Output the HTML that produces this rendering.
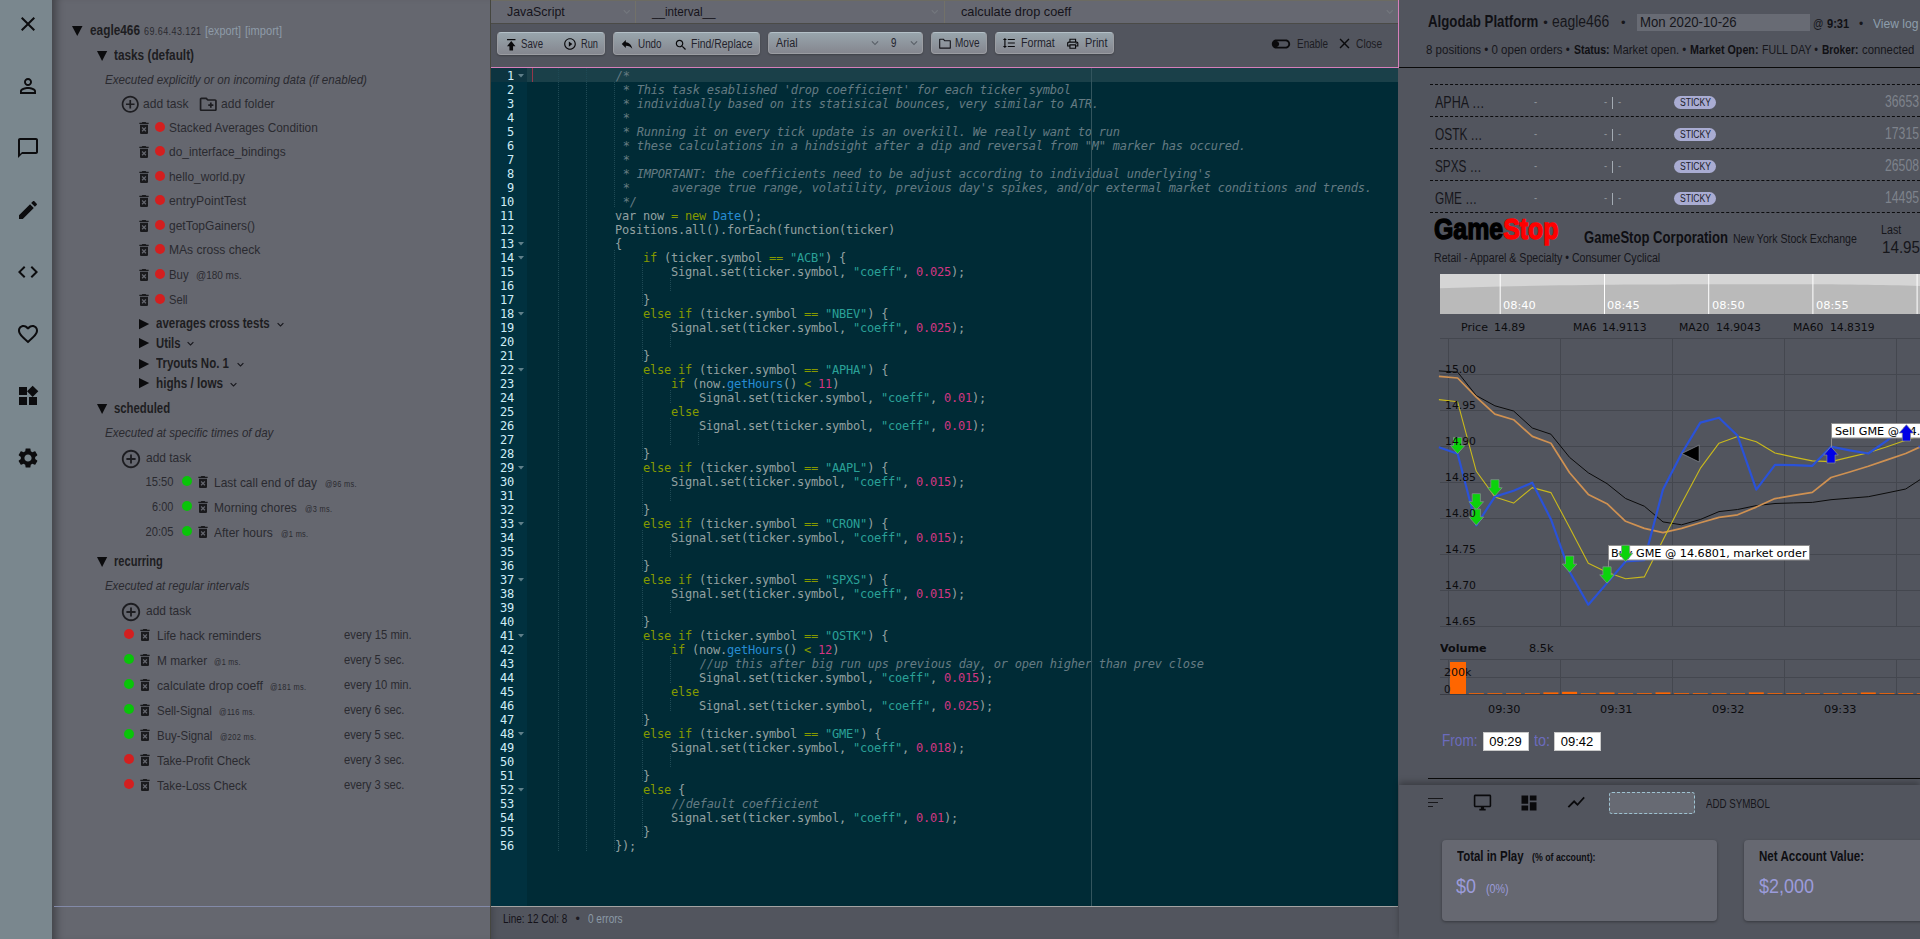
<!DOCTYPE html><html lang="en"><head><meta charset="utf-8"><title>Algodab Platform</title><style>

html,body{margin:0;padding:0}
body{width:1920px;height:939px;overflow:hidden;position:relative;background:#52555e;font-family:"Liberation Sans",sans-serif}
.t{position:absolute;white-space:pre;transform-origin:0 0;display:block}
svg{display:block;overflow:visible}


.btn{position:absolute;box-sizing:border-box;border:1px solid #9b9da2;border-top-color:#b4c0c7;border-radius:4px;background:linear-gradient(#98a5ac,#85878f);box-shadow:0 1px 2px rgba(0,0,0,.25)}
.cl{position:absolute;left:531px;height:14px;margin-top:1px;white-space:pre;font:12px/14px 'DejaVu Sans Mono','Liberation Mono',monospace;letter-spacing:-0.2246px;color:#93a1a1}
.cl i{font-style:italic;color:#657b83;position:relative;left:0.8px}
.cl b{font-weight:normal;color:#859900}
.cl s{text-decoration:none;color:#2aa198}
.cl u{text-decoration:none;color:#d33682}
.cl em{font-style:normal;color:#268bd2}
.gn{position:absolute;margin-top:1px;left:491px;width:23px;height:14px;text-align:right;white-space:pre;font:12px/14px 'DejaVu Sans Mono','Liberation Mono',monospace;letter-spacing:-0.2246px;color:#d0edf7}

</style></head><body>
<div style="position:absolute;left:0px;top:0px;width:52px;height:939px;background:#7a878e;"></div>
<div style="position:absolute;left:52px;top:0px;width:438px;height:939px;background:#65676f;box-shadow:inset 10px 0 9px -6px rgba(0,0,0,.36);"></div>
<div style="position:absolute;left:54px;top:906px;width:436px;height:1px;background:#838aa8;"></div>
<div style="position:absolute;left:490px;top:0px;width:1px;height:939px;background:#45463f;"></div>
<div style="position:absolute;left:491px;top:0px;width:907px;height:24px;background:#666871;border-top:1px solid #6c6b62;border-bottom:1px solid #4b4b47;box-sizing:border-box;"></div>
<div style="position:absolute;left:491px;top:24px;width:907px;height:43px;background:#52555e;"></div>
<div style="position:absolute;left:491px;top:67px;width:908px;height:1px;background:#d77fbb;"></div>
<div style="position:absolute;left:1398px;top:0px;width:1px;height:67px;background:#d77fbb;"></div>
<div style="position:absolute;left:491px;top:68px;width:907px;height:838px;background:#002b36;"></div>
<div style="position:absolute;left:491px;top:68px;width:36px;height:838px;background:#01313f;"></div>
<div style="position:absolute;left:491px;top:68px;width:907px;height:14px;background:#1a4049;"></div>
<div style="position:absolute;left:491px;top:68px;width:36px;height:14px;background:#0d3440;"></div>
<div style="position:absolute;left:491px;top:906px;width:907px;height:1px;background:#a3a3a3;"></div>
<div style="position:absolute;left:491px;top:907px;width:907px;height:32px;background:#52555e;box-shadow:inset 6px 0 6px -4px rgba(0,0,0,.18);"></div>
<div style="position:absolute;left:1399px;top:0px;width:521px;height:939px;background:#52555e;"></div>
<div style="position:absolute;left:1399px;top:67px;width:521px;height:1px;background:#0a0a0a;"></div>
<svg style="position:absolute;left:16.00px;top:12.00px;" width="24" height="24.00" viewBox="0 0 24 24"><path fill="#0c0c0e" d="M19 6.41L17.59 5 12 10.59 6.41 5 5 6.41 10.59 12 5 17.59 6.41 19 12 13.41 17.59 19 19 17.59 13.41 12z"/></svg>
<svg style="position:absolute;left:16.00px;top:74.00px;" width="24" height="24.00" viewBox="0 0 24 24"><path fill="#0c0c0e" d="M12 5.9c1.16 0 2.1.94 2.1 2.1s-.94 2.1-2.1 2.1S9.9 9.16 9.9 8s.94-2.1 2.1-2.1m0 9c2.97 0 6.1 1.46 6.1 2.1v1.1H5.9V17c0-.64 3.13-2.1 6.1-2.1M12 4C9.79 4 8 5.79 8 8s1.79 4 4 4 4-1.79 4-4-1.79-4-4-4zm0 9c-2.67 0-8 1.34-8 4v3h16v-3c0-2.66-5.33-4-8-4z"/></svg>
<svg style="position:absolute;left:16.00px;top:136.00px;" width="24" height="24.00" viewBox="0 0 24 24"><path fill="#0c0c0e" d="M20 2H4c-1.1 0-2 .9-2 2v18l4-4h14c1.1 0 2-.9 2-2V4c0-1.1-.9-2-2-2zm0 14H6l-2 2V4h16v12z"/></svg>
<svg style="position:absolute;left:16.00px;top:198.00px;" width="24" height="24.00" viewBox="0 0 24 24"><path fill="#0c0c0e" d="M3 17.25V21h3.75L17.81 9.94l-3.75-3.75L3 17.25zM20.71 7.04c.39-.39.39-1.02 0-1.41l-2.34-2.34c-.39-.39-1.02-.39-1.41 0l-1.83 1.83 3.75 3.75 1.83-1.83z"/></svg>
<svg style="position:absolute;left:16.00px;top:260.00px;" width="24" height="24.00" viewBox="0 0 24 24"><path fill="#0c0c0e" d="M9.4 16.6L4.8 12l4.6-4.6L8 6l-6 6 6 6 1.4-1.4zm5.2 0l4.6-4.6-4.6-4.6L16 6l6 6-6 6-1.4-1.4z"/></svg>
<svg style="position:absolute;left:16.00px;top:322.00px;" width="24" height="24.00" viewBox="0 0 24 24"><path fill="#0c0c0e" d="M16.5 3c-1.74 0-3.41.81-4.5 2.09C10.91 3.81 9.24 3 7.5 3 4.42 3 2 5.42 2 8.5c0 3.78 3.4 6.86 8.55 11.54L12 21.35l1.45-1.32C18.6 15.36 22 12.28 22 8.5 22 5.42 19.58 3 16.5 3zm-4.4 15.55l-.1.1-.1-.1C7.14 14.24 4 11.39 4 8.5 4 6.5 5.5 5 7.5 5c1.54 0 3.04.99 3.57 2.36h1.87C13.46 5.99 14.96 5 16.5 5c2 0 3.5 1.5 3.5 3.5 0 2.89-3.14 5.74-7.9 10.05z"/></svg>
<svg style="position:absolute;left:16.00px;top:384.00px;" width="24" height="24.00" viewBox="0 0 24 24"><path fill="#0c0c0e" d="M13 13v8h8v-8h-8zM3 21h8v-8H3v8zM3 3v8h8V3H3zm13.66-1.31L11 7.34 16.66 13l5.66-5.66-5.66-5.65z"/></svg>
<svg style="position:absolute;left:16.00px;top:446.00px;" width="24" height="24.00" viewBox="0 0 24 24"><path fill="#0c0c0e" d="M19.14 12.94c.04-.3.06-.61.06-.94 0-.32-.02-.64-.07-.94l2.03-1.58c.18-.14.23-.41.12-.61l-1.92-3.32c-.12-.22-.37-.29-.59-.22l-2.39.96c-.5-.38-1.03-.7-1.62-.94l-.36-2.54c-.04-.24-.24-.41-.48-.41h-3.84c-.24 0-.43.17-.47.41l-.36 2.54c-.59.24-1.13.57-1.62.94l-2.39-.96c-.22-.08-.47 0-.59.22L2.74 8.87c-.12.21-.08.47.12.61l2.03 1.58c-.05.3-.09.63-.09.94s.02.64.07.94l-2.03 1.58c-.18.14-.23.41-.12.61l1.92 3.32c.12.22.37.29.59.22l2.39-.96c.5.38 1.03.7 1.62.94l.36 2.54c.05.24.24.41.48.41h3.84c.24 0 .44-.17.47-.41l.36-2.54c.59-.24 1.13-.56 1.62-.94l2.39.96c.22.08.47 0 .59-.22l1.92-3.32c.12-.22.07-.47-.12-.61l-2.01-1.58zM12 15.6c-1.98 0-3.6-1.62-3.6-3.6s1.62-3.6 3.6-3.6 3.6 1.62 3.6 3.6-1.62 3.6-3.6 3.6z"/></svg>
<svg style="position:absolute;left:72.4px;top:26px" width="10.5" height="10"><polygon fill="#0b0b0d" points="0,0 10.5,0 5.25,10"/></svg>
<svg style="position:absolute;left:96.5px;top:51px" width="10.2" height="10"><polygon fill="#0b0b0d" points="0,0 10.2,0 5.1,10"/></svg>
<svg style="position:absolute;left:120.05px;top:94.15px;" width="20.5" height="20.50" viewBox="0 0 24 24"><path fill="#1d1d21" d="M13 7h-2v4H7v2h4v4h2v-4h4v-2h-4V7zm-1-5C6.48 2 2 6.48 2 12s4.48 10 10 10 10-4.48 10-10S17.52 2 12 2zm0 18c-4.41 0-8-3.59-8-8s3.59-8 8-8 8 3.59 8 8-3.59 8-8 8z"/></svg>
<svg style="position:absolute;left:197.75px;top:94.35px;" width="20.5" height="20.50" viewBox="0 0 24 24"><path fill="#1d1d21" d="M20 6h-8l-2-2H4c-1.11 0-1.99.89-1.99 2L2 18c0 1.11.89 2 2 2h16c1.11 0 2-.89 2-2V8c0-1.11-.89-2-2-2zm0 12H4V6h5.17l2 2H20v10zm-8-4h2v2h2v-2h2v-2h-2v-2h-2v2h-2z"/></svg>
<svg style="position:absolute;left:136.00px;top:119.80px;" width="16" height="16.00" viewBox="0 0 24 24"><path fill="#1a1a1d" d="M6 19c0 1.1.9 2 2 2h8c1.1 0 2-.9 2-2V7H6v12zm2.46-7.12l1.41-1.41L12 12.59l2.12-2.12 1.41 1.41L13.41 14l2.12 2.12-1.41 1.41L12 15.41l-2.12 2.12-1.41-1.41L10.59 14l-2.13-2.12zM15.5 4l-1-1h-5l-1 1H5v2h14V4z"/></svg>
<div style="position:absolute;left:155.0px;top:122.2px;width:10px;height:10px;border-radius:50%;background:#d31f1f"></div>
<svg style="position:absolute;left:136.00px;top:143.80px;" width="16" height="16.00" viewBox="0 0 24 24"><path fill="#1a1a1d" d="M6 19c0 1.1.9 2 2 2h8c1.1 0 2-.9 2-2V7H6v12zm2.46-7.12l1.41-1.41L12 12.59l2.12-2.12 1.41 1.41L13.41 14l2.12 2.12-1.41 1.41L12 15.41l-2.12 2.12-1.41-1.41L10.59 14l-2.13-2.12zM15.5 4l-1-1h-5l-1 1H5v2h14V4z"/></svg>
<div style="position:absolute;left:155.0px;top:146.2px;width:10px;height:10px;border-radius:50%;background:#d31f1f"></div>
<svg style="position:absolute;left:136.00px;top:168.80px;" width="16" height="16.00" viewBox="0 0 24 24"><path fill="#1a1a1d" d="M6 19c0 1.1.9 2 2 2h8c1.1 0 2-.9 2-2V7H6v12zm2.46-7.12l1.41-1.41L12 12.59l2.12-2.12 1.41 1.41L13.41 14l2.12 2.12-1.41 1.41L12 15.41l-2.12 2.12-1.41-1.41L10.59 14l-2.13-2.12zM15.5 4l-1-1h-5l-1 1H5v2h14V4z"/></svg>
<div style="position:absolute;left:155.0px;top:171.2px;width:10px;height:10px;border-radius:50%;background:#d31f1f"></div>
<svg style="position:absolute;left:136.00px;top:192.80px;" width="16" height="16.00" viewBox="0 0 24 24"><path fill="#1a1a1d" d="M6 19c0 1.1.9 2 2 2h8c1.1 0 2-.9 2-2V7H6v12zm2.46-7.12l1.41-1.41L12 12.59l2.12-2.12 1.41 1.41L13.41 14l2.12 2.12-1.41 1.41L12 15.41l-2.12 2.12-1.41-1.41L10.59 14l-2.13-2.12zM15.5 4l-1-1h-5l-1 1H5v2h14V4z"/></svg>
<div style="position:absolute;left:155.0px;top:195.2px;width:10px;height:10px;border-radius:50%;background:#d31f1f"></div>
<svg style="position:absolute;left:136.00px;top:217.80px;" width="16" height="16.00" viewBox="0 0 24 24"><path fill="#1a1a1d" d="M6 19c0 1.1.9 2 2 2h8c1.1 0 2-.9 2-2V7H6v12zm2.46-7.12l1.41-1.41L12 12.59l2.12-2.12 1.41 1.41L13.41 14l2.12 2.12-1.41 1.41L12 15.41l-2.12 2.12-1.41-1.41L10.59 14l-2.13-2.12zM15.5 4l-1-1h-5l-1 1H5v2h14V4z"/></svg>
<div style="position:absolute;left:155.0px;top:220.2px;width:10px;height:10px;border-radius:50%;background:#d31f1f"></div>
<svg style="position:absolute;left:136.00px;top:241.70px;" width="16" height="16.00" viewBox="0 0 24 24"><path fill="#1a1a1d" d="M6 19c0 1.1.9 2 2 2h8c1.1 0 2-.9 2-2V7H6v12zm2.46-7.12l1.41-1.41L12 12.59l2.12-2.12 1.41 1.41L13.41 14l2.12 2.12-1.41 1.41L12 15.41l-2.12 2.12-1.41-1.41L10.59 14l-2.13-2.12zM15.5 4l-1-1h-5l-1 1H5v2h14V4z"/></svg>
<div style="position:absolute;left:155.0px;top:244.1px;width:10px;height:10px;border-radius:50%;background:#d31f1f"></div>
<svg style="position:absolute;left:136.00px;top:266.80px;" width="16" height="16.00" viewBox="0 0 24 24"><path fill="#1a1a1d" d="M6 19c0 1.1.9 2 2 2h8c1.1 0 2-.9 2-2V7H6v12zm2.46-7.12l1.41-1.41L12 12.59l2.12-2.12 1.41 1.41L13.41 14l2.12 2.12-1.41 1.41L12 15.41l-2.12 2.12-1.41-1.41L10.59 14l-2.13-2.12zM15.5 4l-1-1h-5l-1 1H5v2h14V4z"/></svg>
<div style="position:absolute;left:155.0px;top:269.2px;width:10px;height:10px;border-radius:50%;background:#d31f1f"></div>
<svg style="position:absolute;left:136.00px;top:291.80px;" width="16" height="16.00" viewBox="0 0 24 24"><path fill="#1a1a1d" d="M6 19c0 1.1.9 2 2 2h8c1.1 0 2-.9 2-2V7H6v12zm2.46-7.12l1.41-1.41L12 12.59l2.12-2.12 1.41 1.41L13.41 14l2.12 2.12-1.41 1.41L12 15.41l-2.12 2.12-1.41-1.41L10.59 14l-2.13-2.12zM15.5 4l-1-1h-5l-1 1H5v2h14V4z"/></svg>
<div style="position:absolute;left:155.0px;top:294.2px;width:10px;height:10px;border-radius:50%;background:#d31f1f"></div>
<svg style="position:absolute;left:139.1px;top:318.5px" width="10.2" height="10.2"><polygon fill="#0b0b0d" points="0,0 10.2,5.1 0,10.2"/></svg>
<svg style="position:absolute;left:273.70px;top:317.80px;" width="13" height="13.00" viewBox="0 0 24 24"><path fill="#15151a" d="M16.59 8.59L12 13.17 7.41 8.59 6 10l6 6 6-6z"/></svg>
<svg style="position:absolute;left:139.1px;top:338.1px" width="10.2" height="10.2"><polygon fill="#0b0b0d" points="0,0 10.2,5.1 0,10.2"/></svg>
<svg style="position:absolute;left:184.30px;top:337.40px;" width="13" height="13.00" viewBox="0 0 24 24"><path fill="#15151a" d="M16.59 8.59L12 13.17 7.41 8.59 6 10l6 6 6-6z"/></svg>
<svg style="position:absolute;left:139.1px;top:358.5px" width="10.2" height="10.2"><polygon fill="#0b0b0d" points="0,0 10.2,5.1 0,10.2"/></svg>
<svg style="position:absolute;left:233.80px;top:357.80px;" width="13" height="13.00" viewBox="0 0 24 24"><path fill="#15151a" d="M16.59 8.59L12 13.17 7.41 8.59 6 10l6 6 6-6z"/></svg>
<svg style="position:absolute;left:139.1px;top:378.40000000000003px" width="10.2" height="10.2"><polygon fill="#0b0b0d" points="0,0 10.2,5.1 0,10.2"/></svg>
<svg style="position:absolute;left:226.80px;top:377.70px;" width="13" height="13.00" viewBox="0 0 24 24"><path fill="#15151a" d="M16.59 8.59L12 13.17 7.41 8.59 6 10l6 6 6-6z"/></svg>
<svg style="position:absolute;left:96.5px;top:403.6px" width="10.2" height="10"><polygon fill="#0b0b0d" points="0,0 10.2,0 5.1,10"/></svg>
<svg style="position:absolute;left:119.80px;top:447.80px;" width="22" height="22.00" viewBox="0 0 24 24"><path fill="#1d1d21" d="M13 7h-2v4H7v2h4v4h2v-4h4v-2h-4V7zm-1-5C6.48 2 2 6.48 2 12s4.48 10 10 10 10-4.48 10-10S17.52 2 12 2zm0 18c-4.41 0-8-3.59-8-8s3.59-8 8-8 8 3.59 8 8-3.59 8-8 8z"/></svg>
<div style="position:absolute;left:182.0px;top:475.5px;width:10px;height:10px;border-radius:50%;background:#09c409"></div>
<svg style="position:absolute;left:195.30px;top:473.80px;" width="16" height="16.00" viewBox="0 0 24 24"><path fill="#1a1a1d" d="M6 19c0 1.1.9 2 2 2h8c1.1 0 2-.9 2-2V7H6v12zm2.46-7.12l1.41-1.41L12 12.59l2.12-2.12 1.41 1.41L13.41 14l2.12 2.12-1.41 1.41L12 15.41l-2.12 2.12-1.41-1.41L10.59 14l-2.13-2.12zM15.5 4l-1-1h-5l-1 1H5v2h14V4z"/></svg>
<div style="position:absolute;left:182.0px;top:500.5px;width:10px;height:10px;border-radius:50%;background:#09c409"></div>
<svg style="position:absolute;left:195.30px;top:498.80px;" width="16" height="16.00" viewBox="0 0 24 24"><path fill="#1a1a1d" d="M6 19c0 1.1.9 2 2 2h8c1.1 0 2-.9 2-2V7H6v12zm2.46-7.12l1.41-1.41L12 12.59l2.12-2.12 1.41 1.41L13.41 14l2.12 2.12-1.41 1.41L12 15.41l-2.12 2.12-1.41-1.41L10.59 14l-2.13-2.12zM15.5 4l-1-1h-5l-1 1H5v2h14V4z"/></svg>
<div style="position:absolute;left:182.0px;top:525.5px;width:10px;height:10px;border-radius:50%;background:#09c409"></div>
<svg style="position:absolute;left:195.30px;top:523.80px;" width="16" height="16.00" viewBox="0 0 24 24"><path fill="#1a1a1d" d="M6 19c0 1.1.9 2 2 2h8c1.1 0 2-.9 2-2V7H6v12zm2.46-7.12l1.41-1.41L12 12.59l2.12-2.12 1.41 1.41L13.41 14l2.12 2.12-1.41 1.41L12 15.41l-2.12 2.12-1.41-1.41L10.59 14l-2.13-2.12zM15.5 4l-1-1h-5l-1 1H5v2h14V4z"/></svg>
<svg style="position:absolute;left:96.5px;top:556.9px" width="10.2" height="10"><polygon fill="#0b0b0d" points="0,0 10.2,0 5.1,10"/></svg>
<svg style="position:absolute;left:119.80px;top:600.50px;" width="22" height="22.00" viewBox="0 0 24 24"><path fill="#1d1d21" d="M13 7h-2v4H7v2h4v4h2v-4h4v-2h-4V7zm-1-5C6.48 2 2 6.48 2 12s4.48 10 10 10 10-4.48 10-10S17.52 2 12 2zm0 18c-4.41 0-8-3.59-8-8s3.59-8 8-8 8 3.59 8 8-3.59 8-8 8z"/></svg>
<div style="position:absolute;left:123.9px;top:629.1px;width:10px;height:10px;border-radius:50%;background:#d31f1f"></div>
<svg style="position:absolute;left:137.00px;top:627.00px;" width="16" height="16.00" viewBox="0 0 24 24"><path fill="#1a1a1d" d="M6 19c0 1.1.9 2 2 2h8c1.1 0 2-.9 2-2V7H6v12zm2.46-7.12l1.41-1.41L12 12.59l2.12-2.12 1.41 1.41L13.41 14l2.12 2.12-1.41 1.41L12 15.41l-2.12 2.12-1.41-1.41L10.59 14l-2.13-2.12zM15.5 4l-1-1h-5l-1 1H5v2h14V4z"/></svg>
<div style="position:absolute;left:123.9px;top:654.1px;width:10px;height:10px;border-radius:50%;background:#09c409"></div>
<svg style="position:absolute;left:137.00px;top:652.02px;" width="16" height="16.00" viewBox="0 0 24 24"><path fill="#1a1a1d" d="M6 19c0 1.1.9 2 2 2h8c1.1 0 2-.9 2-2V7H6v12zm2.46-7.12l1.41-1.41L12 12.59l2.12-2.12 1.41 1.41L13.41 14l2.12 2.12-1.41 1.41L12 15.41l-2.12 2.12-1.41-1.41L10.59 14l-2.13-2.12zM15.5 4l-1-1h-5l-1 1H5v2h14V4z"/></svg>
<div style="position:absolute;left:123.9px;top:679.1px;width:10px;height:10px;border-radius:50%;background:#09c409"></div>
<svg style="position:absolute;left:137.00px;top:677.04px;" width="16" height="16.00" viewBox="0 0 24 24"><path fill="#1a1a1d" d="M6 19c0 1.1.9 2 2 2h8c1.1 0 2-.9 2-2V7H6v12zm2.46-7.12l1.41-1.41L12 12.59l2.12-2.12 1.41 1.41L13.41 14l2.12 2.12-1.41 1.41L12 15.41l-2.12 2.12-1.41-1.41L10.59 14l-2.13-2.12zM15.5 4l-1-1h-5l-1 1H5v2h14V4z"/></svg>
<div style="position:absolute;left:123.9px;top:704.2px;width:10px;height:10px;border-radius:50%;background:#09c409"></div>
<svg style="position:absolute;left:137.00px;top:702.06px;" width="16" height="16.00" viewBox="0 0 24 24"><path fill="#1a1a1d" d="M6 19c0 1.1.9 2 2 2h8c1.1 0 2-.9 2-2V7H6v12zm2.46-7.12l1.41-1.41L12 12.59l2.12-2.12 1.41 1.41L13.41 14l2.12 2.12-1.41 1.41L12 15.41l-2.12 2.12-1.41-1.41L10.59 14l-2.13-2.12zM15.5 4l-1-1h-5l-1 1H5v2h14V4z"/></svg>
<div style="position:absolute;left:123.9px;top:729.2px;width:10px;height:10px;border-radius:50%;background:#09c409"></div>
<svg style="position:absolute;left:137.00px;top:727.08px;" width="16" height="16.00" viewBox="0 0 24 24"><path fill="#1a1a1d" d="M6 19c0 1.1.9 2 2 2h8c1.1 0 2-.9 2-2V7H6v12zm2.46-7.12l1.41-1.41L12 12.59l2.12-2.12 1.41 1.41L13.41 14l2.12 2.12-1.41 1.41L12 15.41l-2.12 2.12-1.41-1.41L10.59 14l-2.13-2.12zM15.5 4l-1-1h-5l-1 1H5v2h14V4z"/></svg>
<div style="position:absolute;left:123.9px;top:754.2px;width:10px;height:10px;border-radius:50%;background:#d31f1f"></div>
<svg style="position:absolute;left:137.00px;top:752.10px;" width="16" height="16.00" viewBox="0 0 24 24"><path fill="#1a1a1d" d="M6 19c0 1.1.9 2 2 2h8c1.1 0 2-.9 2-2V7H6v12zm2.46-7.12l1.41-1.41L12 12.59l2.12-2.12 1.41 1.41L13.41 14l2.12 2.12-1.41 1.41L12 15.41l-2.12 2.12-1.41-1.41L10.59 14l-2.13-2.12zM15.5 4l-1-1h-5l-1 1H5v2h14V4z"/></svg>
<div style="position:absolute;left:123.9px;top:779.2px;width:10px;height:10px;border-radius:50%;background:#d31f1f"></div>
<svg style="position:absolute;left:137.00px;top:777.12px;" width="16" height="16.00" viewBox="0 0 24 24"><path fill="#1a1a1d" d="M6 19c0 1.1.9 2 2 2h8c1.1 0 2-.9 2-2V7H6v12zm2.46-7.12l1.41-1.41L12 12.59l2.12-2.12 1.41 1.41L13.41 14l2.12 2.12-1.41 1.41L12 15.41l-2.12 2.12-1.41-1.41L10.59 14l-2.13-2.12zM15.5 4l-1-1h-5l-1 1H5v2h14V4z"/></svg>
<svg style="position:absolute;left:620.15px;top:5.05px;" width="13.5" height="13.50" viewBox="0 0 24 24"><path fill="#74777e" d="M16.59 8.59L12 13.17 7.41 8.59 6 10l6 6 6-6z"/></svg>
<div style="position:absolute;left:635px;top:1px;width:1px;height:22px;background:#727169;"></div>
<svg style="position:absolute;left:928.25px;top:5.05px;" width="13.5" height="13.50" viewBox="0 0 24 24"><path fill="#74777e" d="M16.59 8.59L12 13.17 7.41 8.59 6 10l6 6 6-6z"/></svg>
<div style="position:absolute;left:944px;top:1px;width:1px;height:22px;background:#727169;"></div>
<svg style="position:absolute;left:1382.55px;top:5.05px;" width="13.5" height="13.50" viewBox="0 0 24 24"><path fill="#74777e" d="M16.59 8.59L12 13.17 7.41 8.59 6 10l6 6 6-6z"/></svg>
<div class="btn" style="left:497px;top:32px;width:108px;height:23px"></div>
<svg style="position:absolute;left:503.65px;top:35.90px;" width="14.5" height="17.40" viewBox="0 0 24 24" preserveAspectRatio="none"><path fill="#0a0a0c" d="M5 4v2h14V4H5zm0 10h4v6h6v-6h4l-7-7-7 7z"/></svg>
<svg style="position:absolute;left:563.30px;top:37.30px;" width="14" height="14.00" viewBox="0 0 24 24"><path fill="#0a0a0c" d="M10 16.5l6-4.5-6-4.5v9zM12 2C6.48 2 2 6.48 2 12s4.48 10 10 10 10-4.48 10-10S17.52 2 12 2zm0 18c-4.41 0-8-3.59-8-8s3.59-8 8-8 8 3.59 8 8-3.59 8-8 8z"/></svg>
<div class="btn" style="left:613px;top:32px;width:147px;height:23px"></div>
<svg style="position:absolute;left:620.20px;top:37.20px;" width="14" height="14.00" viewBox="0 0 24 24"><path fill="#0a0a0c" d="M10 9V5l-7 7 7 7v-4.1c5 0 8.5 1.6 11 5.1-1-5-4-10-11-11z"/></svg>
<svg style="position:absolute;left:673.60px;top:37.60px;" width="14" height="14.00" viewBox="0 0 24 24"><path fill="#0a0a0c" d="M15.5 14h-.79l-.28-.27C15.41 12.59 16 11.11 16 9.5 16 5.91 13.09 3 9.5 3S3 5.91 3 9.5 5.91 16 9.5 16c1.61 0 3.09-.59 4.23-1.57l.27.28v.79l5 4.99L20.49 19l-4.99-5zm-6 0C7.01 14 5 11.99 5 9.5S7.01 5 9.5 5 14 7.01 14 9.5 11.99 14 9.5 14z"/></svg>
<div class="btn" style="left:768px;top:32px;width:155px;height:22px"></div>
<svg style="position:absolute;left:868.00px;top:35.60px;" width="14" height="14.00" viewBox="0 0 24 24"><path fill="#5a6068" d="M16.59 8.59L12 13.17 7.41 8.59 6 10l6 6 6-6z"/></svg>
<svg style="position:absolute;left:907.00px;top:35.60px;" width="14" height="14.00" viewBox="0 0 24 24"><path fill="#5a6068" d="M16.59 8.59L12 13.17 7.41 8.59 6 10l6 6 6-6z"/></svg>
<div class="btn" style="left:931px;top:32px;width:56px;height:22px"></div>
<svg style="position:absolute;left:938.8px;top:37.6px" width="12" height="11" viewBox="0 0 12 11"><path d="M0.7 1.2h3.6l1.3 1.5h5.7v7.4h-10.6z" fill="none" stroke="#15151a" stroke-width="1.1" stroke-linejoin="round"/></svg>
<div class="btn" style="left:995px;top:32px;width:119px;height:22px"></div>
<svg style="position:absolute;left:1001.50px;top:36.30px;" width="14" height="14.00" viewBox="0 0 24 24"><path fill="#0a0a0c" d="M6 7h2.5L5 3.5 1.5 7H4v10H1.5L5 20.5 8.5 17H6V7zm4-2v2h12V5H10zm0 14h12v-2H10v2zm0-6h12v-2H10v2z"/></svg>
<svg style="position:absolute;left:1065.75px;top:36.55px;" width="13.5" height="13.50" viewBox="0 0 24 24"><path fill="#0a0a0c" d="M19 8h-1V3H6v5H5c-1.66 0-3 1.34-3 3v6h4v4h12v-4h4v-6c0-1.66-1.34-3-3-3zM8 5h8v3H8V5zm8 12v2H8v-4h8v2zm2-2v-2H6v2H4v-4c0-.55.45-1 1-1h14c.55 0 1 .45 1 1v4h-2zM18 10.5a1 1 0 1 0 0 2 1 1 0 1 0 0-2z"/></svg>
<svg style="position:absolute;left:1269.80px;top:32.70px;" width="22" height="22.00" viewBox="0 0 24 24"><path fill="#0a0a0c" d="M17 7H7c-2.76 0-5 2.24-5 5s2.24 5 5 5h10c2.76 0 5-2.24 5-5s-2.24-5-5-5zm0 8H7c-1.65 0-3-1.35-3-3s1.35-3 3-3h10c1.65 0 3 1.35 3 3s-1.35 3-3 3zM7 9c-1.66 0-3 1.34-3 3s1.34 3 3 3 3-1.34 3-3-1.34-3-3-3z"/></svg>
<svg style="position:absolute;left:1336.00px;top:35.20px;" width="17" height="17.00" viewBox="0 0 24 24"><path fill="#0a0a0c" d="M19 6.41L17.59 5 12 10.59 6.41 5 5 6.41 10.59 12 5 17.59 6.41 19 12 13.41 17.59 19 19 17.59 13.41 12z"/></svg>
<div class="gn" style="top:68px">1</div>
<div class="cl" style="top:68px">            <i>/*</i></div>
<div class="gn" style="top:82px">2</div>
<div class="cl" style="top:82px">             <i>* This task esablished 'drop coefficient' for each ticker symbol</i></div>
<div class="gn" style="top:96px">3</div>
<div class="cl" style="top:96px">             <i>* individually based on its statisical bounces, very similar to ATR.</i></div>
<div class="gn" style="top:110px">4</div>
<div class="cl" style="top:110px">             <i>*</i></div>
<div class="gn" style="top:124px">5</div>
<div class="cl" style="top:124px">             <i>* Running it on every tick update is an overkill. We really want to run</i></div>
<div class="gn" style="top:138px">6</div>
<div class="cl" style="top:138px">             <i>* these calculations in a hindsight after a dip and reversal from "M" marker has occured.</i></div>
<div class="gn" style="top:152px">7</div>
<div class="cl" style="top:152px">             <i>*</i></div>
<div class="gn" style="top:166px">8</div>
<div class="cl" style="top:166px">             <i>* IMPORTANT: the coefficients need to be adjust according to individual underlying's</i></div>
<div class="gn" style="top:180px">9</div>
<div class="cl" style="top:180px">             <i>*      average true range, volatility, previous day's spikes, and/or extermal market conditions and trends.</i></div>
<div class="gn" style="top:194px">10</div>
<div class="cl" style="top:194px">             <i>*/</i></div>
<div class="gn" style="top:208px">11</div>
<div class="cl" style="top:208px">            var now <b>=</b> <b>new</b> <em>Date</em>();</div>
<div class="gn" style="top:222px">12</div>
<div class="cl" style="top:222px">            Positions.all().forEach(function(ticker)</div>
<div class="gn" style="top:236px">13</div>
<div class="cl" style="top:236px">            {</div>
<div class="gn" style="top:250px">14</div>
<div class="cl" style="top:250px">                <b>if</b> (ticker.symbol <b>==</b> <s>"ACB"</s>) {</div>
<div class="gn" style="top:264px">15</div>
<div class="cl" style="top:264px">                    Signal.set(ticker.symbol, <s>"coeff"</s>, <u>0.025</u>);</div>
<div class="gn" style="top:278px">16</div>
<div class="gn" style="top:292px">17</div>
<div class="cl" style="top:292px">                }</div>
<div class="gn" style="top:306px">18</div>
<div class="cl" style="top:306px">                <b>else</b> <b>if</b> (ticker.symbol <b>==</b> <s>"NBEV"</s>) {</div>
<div class="gn" style="top:320px">19</div>
<div class="cl" style="top:320px">                    Signal.set(ticker.symbol, <s>"coeff"</s>, <u>0.025</u>);</div>
<div class="gn" style="top:334px">20</div>
<div class="gn" style="top:348px">21</div>
<div class="cl" style="top:348px">                }</div>
<div class="gn" style="top:362px">22</div>
<div class="cl" style="top:362px">                <b>else</b> <b>if</b> (ticker.symbol <b>==</b> <s>"APHA"</s>) {</div>
<div class="gn" style="top:376px">23</div>
<div class="cl" style="top:376px">                    <b>if</b> (now.<em>getHours</em>() <b>&lt;</b> <u>11</u>)</div>
<div class="gn" style="top:390px">24</div>
<div class="cl" style="top:390px">                        Signal.set(ticker.symbol, <s>"coeff"</s>, <u>0.01</u>);</div>
<div class="gn" style="top:404px">25</div>
<div class="cl" style="top:404px">                    <b>else</b></div>
<div class="gn" style="top:418px">26</div>
<div class="cl" style="top:418px">                        Signal.set(ticker.symbol, <s>"coeff"</s>, <u>0.01</u>);</div>
<div class="gn" style="top:432px">27</div>
<div class="gn" style="top:446px">28</div>
<div class="cl" style="top:446px">                }</div>
<div class="gn" style="top:460px">29</div>
<div class="cl" style="top:460px">                <b>else</b> <b>if</b> (ticker.symbol <b>==</b> <s>"AAPL"</s>) {</div>
<div class="gn" style="top:474px">30</div>
<div class="cl" style="top:474px">                    Signal.set(ticker.symbol, <s>"coeff"</s>, <u>0.015</u>);</div>
<div class="gn" style="top:488px">31</div>
<div class="gn" style="top:502px">32</div>
<div class="cl" style="top:502px">                }</div>
<div class="gn" style="top:516px">33</div>
<div class="cl" style="top:516px">                <b>else</b> <b>if</b> (ticker.symbol <b>==</b> <s>"CRON"</s>) {</div>
<div class="gn" style="top:530px">34</div>
<div class="cl" style="top:530px">                    Signal.set(ticker.symbol, <s>"coeff"</s>, <u>0.015</u>);</div>
<div class="gn" style="top:544px">35</div>
<div class="gn" style="top:558px">36</div>
<div class="cl" style="top:558px">                }</div>
<div class="gn" style="top:572px">37</div>
<div class="cl" style="top:572px">                <b>else</b> <b>if</b> (ticker.symbol <b>==</b> <s>"SPXS"</s>) {</div>
<div class="gn" style="top:586px">38</div>
<div class="cl" style="top:586px">                    Signal.set(ticker.symbol, <s>"coeff"</s>, <u>0.015</u>);</div>
<div class="gn" style="top:600px">39</div>
<div class="gn" style="top:614px">40</div>
<div class="cl" style="top:614px">                }</div>
<div class="gn" style="top:628px">41</div>
<div class="cl" style="top:628px">                <b>else</b> <b>if</b> (ticker.symbol <b>==</b> <s>"OSTK"</s>) {</div>
<div class="gn" style="top:642px">42</div>
<div class="cl" style="top:642px">                    <b>if</b> (now.<em>getHours</em>() <b>&lt;</b> <u>12</u>)</div>
<div class="gn" style="top:656px">43</div>
<div class="cl" style="top:656px">                        <i>//up this after big run ups previous day, or open higher than prev close</i></div>
<div class="gn" style="top:670px">44</div>
<div class="cl" style="top:670px">                        Signal.set(ticker.symbol, <s>"coeff"</s>, <u>0.015</u>);</div>
<div class="gn" style="top:684px">45</div>
<div class="cl" style="top:684px">                    <b>else</b></div>
<div class="gn" style="top:698px">46</div>
<div class="cl" style="top:698px">                        Signal.set(ticker.symbol, <s>"coeff"</s>, <u>0.025</u>);</div>
<div class="gn" style="top:712px">47</div>
<div class="cl" style="top:712px">                }</div>
<div class="gn" style="top:726px">48</div>
<div class="cl" style="top:726px">                <b>else</b> <b>if</b> (ticker.symbol <b>==</b> <s>"GME"</s>) {</div>
<div class="gn" style="top:740px">49</div>
<div class="cl" style="top:740px">                    Signal.set(ticker.symbol, <s>"coeff"</s>, <u>0.018</u>);</div>
<div class="gn" style="top:754px">50</div>
<div class="gn" style="top:768px">51</div>
<div class="cl" style="top:768px">                }</div>
<div class="gn" style="top:782px">52</div>
<div class="cl" style="top:782px">                <b>else</b> {</div>
<div class="gn" style="top:796px">53</div>
<div class="cl" style="top:796px">                    <i>//default coefficient</i></div>
<div class="gn" style="top:810px">54</div>
<div class="cl" style="top:810px">                    Signal.set(ticker.symbol, <s>"coeff"</s>, <u>0.01</u>);</div>
<div class="gn" style="top:824px">55</div>
<div class="cl" style="top:824px">                }</div>
<div class="gn" style="top:838px">56</div>
<div class="cl" style="top:838px">            });</div>
<div style="position:absolute;left:558px;top:68px;width:1px;height:784px;background:repeating-linear-gradient(to bottom,#1f4a55 0 1px,transparent 1px 2px)"></div>
<div style="position:absolute;left:586px;top:68px;width:1px;height:784px;background:repeating-linear-gradient(to bottom,#1f4a55 0 1px,transparent 1px 2px)"></div>
<div style="position:absolute;left:614px;top:82px;width:1px;height:126px;background:repeating-linear-gradient(to bottom,#1f4a55 0 1px,transparent 1px 2px)"></div>
<div style="position:absolute;left:614px;top:250px;width:1px;height:602px;background:repeating-linear-gradient(to bottom,#1f4a55 0 1px,transparent 1px 2px)"></div>
<div style="position:absolute;left:642px;top:264px;width:1px;height:42px;background:repeating-linear-gradient(to bottom,#1f4a55 0 1px,transparent 1px 2px)"></div>
<div style="position:absolute;left:642px;top:320px;width:1px;height:42px;background:repeating-linear-gradient(to bottom,#1f4a55 0 1px,transparent 1px 2px)"></div>
<div style="position:absolute;left:642px;top:376px;width:1px;height:84px;background:repeating-linear-gradient(to bottom,#1f4a55 0 1px,transparent 1px 2px)"></div>
<div style="position:absolute;left:642px;top:474px;width:1px;height:42px;background:repeating-linear-gradient(to bottom,#1f4a55 0 1px,transparent 1px 2px)"></div>
<div style="position:absolute;left:642px;top:530px;width:1px;height:42px;background:repeating-linear-gradient(to bottom,#1f4a55 0 1px,transparent 1px 2px)"></div>
<div style="position:absolute;left:642px;top:586px;width:1px;height:42px;background:repeating-linear-gradient(to bottom,#1f4a55 0 1px,transparent 1px 2px)"></div>
<div style="position:absolute;left:642px;top:642px;width:1px;height:84px;background:repeating-linear-gradient(to bottom,#1f4a55 0 1px,transparent 1px 2px)"></div>
<div style="position:absolute;left:642px;top:740px;width:1px;height:42px;background:repeating-linear-gradient(to bottom,#1f4a55 0 1px,transparent 1px 2px)"></div>
<div style="position:absolute;left:642px;top:796px;width:1px;height:42px;background:repeating-linear-gradient(to bottom,#1f4a55 0 1px,transparent 1px 2px)"></div>
<div style="position:absolute;left:670px;top:278px;width:1px;height:14px;background:repeating-linear-gradient(to bottom,#1f4a55 0 1px,transparent 1px 2px)"></div>
<div style="position:absolute;left:670px;top:334px;width:1px;height:14px;background:repeating-linear-gradient(to bottom,#1f4a55 0 1px,transparent 1px 2px)"></div>
<div style="position:absolute;left:670px;top:390px;width:1px;height:14px;background:repeating-linear-gradient(to bottom,#1f4a55 0 1px,transparent 1px 2px)"></div>
<div style="position:absolute;left:670px;top:418px;width:1px;height:28px;background:repeating-linear-gradient(to bottom,#1f4a55 0 1px,transparent 1px 2px)"></div>
<div style="position:absolute;left:670px;top:488px;width:1px;height:14px;background:repeating-linear-gradient(to bottom,#1f4a55 0 1px,transparent 1px 2px)"></div>
<div style="position:absolute;left:670px;top:544px;width:1px;height:14px;background:repeating-linear-gradient(to bottom,#1f4a55 0 1px,transparent 1px 2px)"></div>
<div style="position:absolute;left:670px;top:600px;width:1px;height:14px;background:repeating-linear-gradient(to bottom,#1f4a55 0 1px,transparent 1px 2px)"></div>
<div style="position:absolute;left:670px;top:656px;width:1px;height:28px;background:repeating-linear-gradient(to bottom,#1f4a55 0 1px,transparent 1px 2px)"></div>
<div style="position:absolute;left:670px;top:698px;width:1px;height:14px;background:repeating-linear-gradient(to bottom,#1f4a55 0 1px,transparent 1px 2px)"></div>
<div style="position:absolute;left:670px;top:754px;width:1px;height:14px;background:repeating-linear-gradient(to bottom,#1f4a55 0 1px,transparent 1px 2px)"></div>
<div style="position:absolute;left:698px;top:432px;width:1px;height:14px;background:repeating-linear-gradient(to bottom,#1f4a55 0 1px,transparent 1px 2px)"></div>
<svg style="position:absolute;left:517.5px;top:73.5px" width="6" height="4"><polygon points="0,0 6,0 3,3.6" fill="#5f7f89"/></svg>
<svg style="position:absolute;left:517.5px;top:241.5px" width="6" height="4"><polygon points="0,0 6,0 3,3.6" fill="#5f7f89"/></svg>
<svg style="position:absolute;left:517.5px;top:255.5px" width="6" height="4"><polygon points="0,0 6,0 3,3.6" fill="#5f7f89"/></svg>
<svg style="position:absolute;left:517.5px;top:311.5px" width="6" height="4"><polygon points="0,0 6,0 3,3.6" fill="#5f7f89"/></svg>
<svg style="position:absolute;left:517.5px;top:367.5px" width="6" height="4"><polygon points="0,0 6,0 3,3.6" fill="#5f7f89"/></svg>
<svg style="position:absolute;left:517.5px;top:465.5px" width="6" height="4"><polygon points="0,0 6,0 3,3.6" fill="#5f7f89"/></svg>
<svg style="position:absolute;left:517.5px;top:521.5px" width="6" height="4"><polygon points="0,0 6,0 3,3.6" fill="#5f7f89"/></svg>
<svg style="position:absolute;left:517.5px;top:577.5px" width="6" height="4"><polygon points="0,0 6,0 3,3.6" fill="#5f7f89"/></svg>
<svg style="position:absolute;left:517.5px;top:633.5px" width="6" height="4"><polygon points="0,0 6,0 3,3.6" fill="#5f7f89"/></svg>
<svg style="position:absolute;left:517.5px;top:731.5px" width="6" height="4"><polygon points="0,0 6,0 3,3.6" fill="#5f7f89"/></svg>
<svg style="position:absolute;left:517.5px;top:787.5px" width="6" height="4"><polygon points="0,0 6,0 3,3.6" fill="#5f7f89"/></svg>
<div style="position:absolute;left:1091px;top:68px;width:1px;height:838px;background:#33555e;"></div>
<div style="position:absolute;left:532px;top:68px;width:1px;height:14px;background:#93374a;"></div>
<div style="position:absolute;left:1637px;top:14px;width:173px;height:17px;background:#686b74;"></div>
<div style="position:absolute;left:1430px;top:84px;width:490px;height:0;border-top:1px dashed #0c0c0e"></div>
<div style="position:absolute;left:1430px;top:116px;width:490px;height:0;border-top:1px dashed #0c0c0e"></div>
<div style="position:absolute;left:1430px;top:148px;width:490px;height:0;border-top:1px dashed #0c0c0e"></div>
<div style="position:absolute;left:1430px;top:180px;width:490px;height:0;border-top:1px dashed #0c0c0e"></div>
<div style="position:absolute;left:1430px;top:212px;width:490px;height:0;border-top:1px dashed #0c0c0e"></div>
<div style="position:absolute;left:1612px;top:96.7px;width:1px;height:12px;background:#a3abb3;"></div>
<div style="position:absolute;left:1673.5px;top:95.5px;width:42.6px;height:13.6px;border-radius:7px;background:#a9acd2"></div>
<div style="position:absolute;left:1612px;top:128.7px;width:1px;height:12px;background:#a3abb3;"></div>
<div style="position:absolute;left:1673.5px;top:127.5px;width:42.6px;height:13.6px;border-radius:7px;background:#a9acd2"></div>
<div style="position:absolute;left:1612px;top:160.7px;width:1px;height:12px;background:#a3abb3;"></div>
<div style="position:absolute;left:1673.5px;top:159.5px;width:42.6px;height:13.6px;border-radius:7px;background:#a9acd2"></div>
<div style="position:absolute;left:1612px;top:192.7px;width:1px;height:12px;background:#a3abb3;"></div>
<div style="position:absolute;left:1673.5px;top:191.5px;width:42.6px;height:13.6px;border-radius:7px;background:#a9acd2"></div>
<svg style="position:absolute;left:1440px;top:274px" width="480" height="40" viewBox="0 0 480 40">
<rect width="480" height="40" fill="#bababa"/>
<path d="M0,0H480V12C440,11 400,10.4 330,10.3C230,10.2 130,10.6 60,12.6L0,14.3Z" fill="#d5d5d5"/>
<g fill="#fff"><rect x="59.7" y="0" width="1" height="40"/><rect x="164" y="0" width="1" height="40"/><rect x="268.2" y="0" width="1" height="40"/><rect x="372.4" y="0" width="1" height="40"/><rect x="476.6" y="0" width="1" height="40"/></g>
</svg>
<svg style="position:absolute;left:1440px;top:336px" width="480" height="300" viewBox="0 0 480 300">
<g stroke="#44474f" stroke-width="1" shape-rendering="crispEdges">
<line x1="0" x2="480" y1="2.5" y2="2.5"/>
<line x1="8.5" x2="8.5" y1="2" y2="290.5"/>
<line x1="120.5" x2="120.5" y1="2" y2="290.5"/>
<line x1="232.5" x2="232.5" y1="2" y2="290.5"/>
<line x1="344.5" x2="344.5" y1="2" y2="290.5"/>
<line x1="456.5" x2="456.5" y1="2" y2="290.5"/>
<line x1="0" x2="480" y1="38.2" y2="38.2"/>
<line x1="0" x2="480" y1="74.2" y2="74.2"/>
<line x1="0" x2="480" y1="110.3" y2="110.3"/>
<line x1="0" x2="480" y1="146.3" y2="146.3"/>
<line x1="0" x2="480" y1="182.4" y2="182.4"/>
<line x1="0" x2="480" y1="218.5" y2="218.5"/>
<line x1="0" x2="480" y1="254.5" y2="254.5"/>
<line x1="0" x2="480" y1="290.5" y2="290.5"/>
</g>
<g fill="none" stroke-linejoin="round"><polyline points="-1.1,34.9 17.6,36.1 36.3,59.6 54.9,69.8 73.6,75.0 92.3,92.0 110.9,98.2 129.6,121.4 148.3,136.8 167.0,147.6 185.6,162.5 204.3,170.2 223.0,185.9 241.6,188.8 260.3,183.5 279.0,175.6 297.6,173.5 316.3,169.6 335.0,167.5 353.7,166.9 372.3,166.4 391.0,163.7 409.7,162.2 428.3,160.7 447.0,156.9 465.7,153.0 484.3,140.9" stroke="#0b0b0b" stroke-width="1"/><polyline points="-1.1,40.4 17.6,42.0 36.3,61.1 54.9,78.1 73.6,83.7 92.3,100.4 110.9,107.2 129.6,136.8 148.3,158.4 167.0,167.7 185.6,185.3 204.3,192.4 223.0,196.6 241.6,192.4 260.3,186.7 279.0,181.4 297.6,178.8 316.3,171.1 335.0,162.6 353.7,159.4 372.3,156.4 391.0,141.5 409.7,136.0 428.3,130.2 447.0,123.9 465.7,117.5 484.3,109.0" stroke="#cf9152" stroke-width="1.7"/><polyline points="-1.1,63.6 17.6,65.8 36.3,135.3 54.9,160.9 73.6,167.1 92.3,151.6 110.9,156.6 129.6,191.5 148.3,227.3 167.0,236.3 185.6,242.8 204.3,240.9 223.0,204.0 241.6,167.5 260.3,132.4 279.0,107.2 297.6,100.4 316.3,105.8 335.0,117.0 353.7,121.1 372.3,124.9 391.0,125.6 409.7,121.1 428.3,116.8 447.0,110.7 465.7,104.3 484.3,98.0" stroke="#c9b91c" stroke-width="1.1"/><polyline points="-1.1,111.2 17.6,117.7 36.3,189.3 54.9,160.6 73.6,154.7 92.3,146.7 110.9,183.2 129.6,235.7 148.3,268.7 167.0,247.1 185.6,225.5 204.3,224.2 223.0,153.4 241.6,117.5 260.3,86.6 279.0,81.7 297.6,99.8 316.3,153.7 335.0,128.8 353.7,129.2 372.3,129.8 391.0,110.7 409.7,114.3 428.3,117.5 447.0,104.7 465.7,88.7" stroke="#2a52d8" stroke-width="2.2"/></g>
<g fill="#fff" stroke="#8d8d8d" stroke-width="1"><path d="M168.5,224.5V232"/><rect x="168.5" y="209.5" width="201" height="14.5"/><path d="M391.5,102.5V111"/><rect x="391.5" y="87.5" width="100" height="14.5"/></g>
<rect x="478.6" y="109.6" width="1.4" height="2" fill="#2a52d8"/>
</svg>
<svg style="position:absolute;left:1440px;top:656px" width="480" height="42" viewBox="0 0 480 42">
<g stroke="#44474f" stroke-width="1" shape-rendering="crispEdges"><line x1="0" x2="480" y1="3.5" y2="3.5"/><line x1="0" x2="480" y1="21.5" y2="21.5"/>
<line x1="8.5" x2="8.5" y1="3" y2="38"/>
<line x1="120.5" x2="120.5" y1="3" y2="38"/>
<line x1="232.5" x2="232.5" y1="3" y2="38"/>
<line x1="344.5" x2="344.5" y1="3" y2="38"/>
<line x1="456.5" x2="456.5" y1="3" y2="38"/>
</g>
<rect x="10" y="6" width="16" height="32" fill="#ff6600"/>
<rect x="28.8" y="37.2" width="15" height="0.8" fill="#ff6600"/>
<rect x="47.4" y="37.2" width="15" height="0.8" fill="#ff6600"/>
<rect x="66.1" y="37.2" width="15" height="0.8" fill="#ff6600"/>
<rect x="84.8" y="37.2" width="15" height="0.8" fill="#ff6600"/>
<rect x="103.4" y="36.4" width="15" height="1.6" fill="#ff6600"/>
<rect x="122.1" y="35.8" width="15" height="2.2" fill="#ff6600"/>
<rect x="140.8" y="37.2" width="15" height="0.8" fill="#ff6600"/>
<rect x="159.5" y="36.5" width="15" height="1.5" fill="#ff6600"/>
<rect x="178.1" y="37.2" width="15" height="0.8" fill="#ff6600"/>
<rect x="196.8" y="37.2" width="15" height="0.8" fill="#ff6600"/>
<rect x="215.5" y="36.4" width="15" height="1.6" fill="#ff6600"/>
<rect x="234.1" y="37.2" width="15" height="0.8" fill="#ff6600"/>
<rect x="252.8" y="37.2" width="15" height="0.8" fill="#ff6600"/>
<rect x="271.5" y="37.2" width="15" height="0.8" fill="#ff6600"/>
<rect x="290.1" y="37.2" width="15" height="0.8" fill="#ff6600"/>
<rect x="308.8" y="36.4" width="15" height="1.6" fill="#ff6600"/>
<rect x="327.5" y="37.2" width="15" height="0.8" fill="#ff6600"/>
<rect x="346.2" y="37.2" width="15" height="0.8" fill="#ff6600"/>
<rect x="364.8" y="37.2" width="15" height="0.8" fill="#ff6600"/>
<rect x="383.5" y="37.2" width="15" height="0.8" fill="#ff6600"/>
<rect x="402.2" y="37.2" width="15" height="0.8" fill="#ff6600"/>
<rect x="420.8" y="36.5" width="15" height="1.5" fill="#ff6600"/>
<rect x="439.5" y="37.2" width="15" height="0.8" fill="#ff6600"/>
<rect x="458.2" y="37.2" width="15" height="0.8" fill="#ff6600"/>
<rect x="476.8" y="37.2" width="15" height="0.8" fill="#ff6600"/>
<line x1="0" x2="480" y1="38.5" y2="38.5" stroke="#3a3c44" stroke-width="1" shape-rendering="crispEdges"/>
</svg>
<div style="position:absolute;left:1482.5px;top:732px;width:46.5px;height:19px;background:#fff;border:1px solid #c9c9c9;box-sizing:border-box;"></div>
<div style="position:absolute;left:1554px;top:732px;width:46.5px;height:19px;background:#fff;border:1px solid #c9c9c9;box-sizing:border-box;"></div>
<div style="position:absolute;left:1428px;top:778px;width:492px;height:1px;background:#0a0a0a;"></div>
<div style="position:absolute;left:1399px;top:785px;width:521px;height:154px;background:#52555e;box-shadow:0 -3px 6px rgba(0,0,0,.28)"></div>
<div style="position:absolute;left:1427.6px;top:798px;width:15.4px;height:1px;background:#17171a;"></div>
<div style="position:absolute;left:1427.6px;top:802px;width:10.2px;height:1px;background:#17171a;"></div>
<div style="position:absolute;left:1427.6px;top:806px;width:5.2px;height:1px;background:#17171a;"></div>
<svg style="position:absolute;left:1472.80px;top:793.10px;" width="19" height="19.00" viewBox="0 0 24 24"><path fill="#0a0a0c" d="M21 2H3c-1.1 0-2 .9-2 2v12c0 1.1.9 2 2 2h7v2H8v2h8v-2h-2v-2h7c1.1 0 2-.9 2-2V4c0-1.1-.9-2-2-2zm0 14H3V4h18v12z"/></svg>
<svg style="position:absolute;left:1519.00px;top:792.50px;" width="20" height="20.00" viewBox="0 0 24 24"><path fill="#0a0a0c" d="M3 13h8V3H3v10zm0 8h8v-6H3v6zm10 0h8V11h-8v10zm0-18v6h8V3h-8z"/></svg>
<svg style="position:absolute;left:1566.25px;top:791.75px;" width="20.5" height="20.50" viewBox="0 0 24 24"><path fill="#0a0a0c" d="M3.5 18.49l6-6.01 4 4L22 6.92l-1.41-1.41-7.09 7.97-4-4L2 16.99z"/></svg>
<div style="position:absolute;left:1609px;top:792px;width:86px;height:22px;box-sizing:border-box;border:1px dashed #9ec3d2;border-radius:3px;background:#676a73"></div>
<div style="position:absolute;left:1441.5px;top:840px;width:275px;height:80.5px;border-radius:4px;background:#666871;box-shadow:0 1px 3px rgba(0,0,0,.35)"></div>
<div style="position:absolute;left:1743.7px;top:840px;width:275px;height:80.5px;border-radius:4px;background:#666871;box-shadow:0 1px 3px rgba(0,0,0,.35)"></div>
<span class="t" style="font:normal bold 14px/14px 'Liberation Sans', sans-serif;color:#1d1d21;top:23.01px;left:90.00px;transform:scaleX(0.8450);">eagle466</span>
<span class="t" style="font:normal normal 10.5px/10.5px 'Liberation Sans', sans-serif;color:#2a2a2f;top:26.01px;letter-spacing:0.5px;left:144.00px;transform:scaleX(0.8542);">69.64.43.121</span>
<span class="t" style="font:normal normal 12px/12px 'Liberation Sans', sans-serif;color:#8e9ba8;top:25.02px;left:205.20px;transform:scaleX(0.8993);">[export]</span>
<span class="t" style="font:normal normal 12px/12px 'Liberation Sans', sans-serif;color:#8e9ba8;top:25.02px;left:245.30px;transform:scaleX(0.9246);">[import]</span>
<span class="t" style="font:normal bold 14px/14px 'Liberation Sans', sans-serif;color:#1d1d21;top:48.00px;left:114.40px;transform:scaleX(0.8428);">tasks (default)</span>
<span class="t" style="font:italic normal 13px/13px 'Liberation Sans', sans-serif;color:#2a2a2f;top:73.01px;left:105.00px;transform:scaleX(0.8930);">Executed explicitly or on incoming data (if enabled)</span>
<span class="t" style="font:normal normal 13px/13px 'Liberation Sans', sans-serif;color:#2a2a2f;top:97.00px;left:143.20px;transform:scaleX(0.9256);">add task</span>
<span class="t" style="font:normal normal 13px/13px 'Liberation Sans', sans-serif;color:#2a2a2f;top:97.00px;left:221.20px;transform:scaleX(0.9269);">add folder</span>
<span class="t" style="font:normal normal 13px/13px 'Liberation Sans', sans-serif;color:#2a2a2f;top:121.01px;left:168.50px;transform:scaleX(0.9124);">Stacked Averages Condition</span>
<span class="t" style="font:normal normal 13px/13px 'Liberation Sans', sans-serif;color:#2a2a2f;top:145.01px;left:168.50px;transform:scaleX(0.9173);">do_interface_bindings</span>
<span class="t" style="font:normal normal 13px/13px 'Liberation Sans', sans-serif;color:#2a2a2f;top:170.01px;left:168.50px;transform:scaleX(0.9133);">hello_world.py</span>
<span class="t" style="font:normal normal 13px/13px 'Liberation Sans', sans-serif;color:#2a2a2f;top:194.01px;left:168.50px;transform:scaleX(0.9360);">entryPointTest</span>
<span class="t" style="font:normal normal 13px/13px 'Liberation Sans', sans-serif;color:#2a2a2f;top:219.01px;left:168.50px;transform:scaleX(0.9236);">getTopGainers()</span>
<span class="t" style="font:normal normal 13px/13px 'Liberation Sans', sans-serif;color:#2a2a2f;top:243.00px;left:168.50px;transform:scaleX(0.9293);">MAs cross check</span>
<span class="t" style="font:normal normal 13px/13px 'Liberation Sans', sans-serif;color:#2a2a2f;top:268.01px;left:168.50px;transform:scaleX(0.8748);">Buy</span>
<span class="t" style="font:normal normal 10px/10px 'Liberation Sans', sans-serif;color:#2a2a2f;top:271.00px;left:196.00px;">@180 ms.</span>
<span class="t" style="font:normal normal 13px/13px 'Liberation Sans', sans-serif;color:#2a2a2f;top:293.01px;left:168.50px;transform:scaleX(0.8576);">Sell</span>
<span class="t" style="font:normal bold 14px/14px 'Liberation Sans', sans-serif;color:#1d1d21;top:316.01px;left:156.20px;transform:scaleX(0.8199);">averages cross tests</span>
<span class="t" style="font:normal bold 14px/14px 'Liberation Sans', sans-serif;color:#1d1d21;top:336.01px;left:156.20px;transform:scaleX(0.8074);">Utils</span>
<span class="t" style="font:normal bold 14px/14px 'Liberation Sans', sans-serif;color:#1d1d21;top:356.01px;left:156.20px;transform:scaleX(0.8231);">Tryouts No. 1</span>
<span class="t" style="font:normal bold 14px/14px 'Liberation Sans', sans-serif;color:#1d1d21;top:376.00px;left:156.20px;transform:scaleX(0.8374);">highs / lows</span>
<span class="t" style="font:normal bold 14px/14px 'Liberation Sans', sans-serif;color:#1d1d21;top:401.00px;left:114.10px;transform:scaleX(0.8101);">scheduled</span>
<span class="t" style="font:italic normal 13px/13px 'Liberation Sans', sans-serif;color:#2a2a2f;top:426.00px;left:105.20px;transform:scaleX(0.8895);">Executed at specific times of day</span>
<span class="t" style="font:normal normal 13px/13px 'Liberation Sans', sans-serif;color:#2a2a2f;top:451.00px;left:145.50px;transform:scaleX(0.9195);">add task</span>
<span class="t" style="font:normal normal 13px/13px 'Liberation Sans', sans-serif;color:#2a2a2f;top:475.00px;right:1746.40px;transform-origin:100% 0;transform:scaleX(0.8603);">15:50</span>
<span class="t" style="font:normal normal 13px/13px 'Liberation Sans', sans-serif;color:#2a2a2f;top:476.00px;left:214.40px;transform:scaleX(0.9185);">Last call end of day</span>
<span class="t" style="font:normal normal 9.5px/9.5px 'Liberation Sans', sans-serif;color:#2a2a2f;top:479.01px;letter-spacing:0.4px;left:324.70px;transform:scaleX(0.7789);">@96 ms.</span>
<span class="t" style="font:normal normal 13px/13px 'Liberation Sans', sans-serif;color:#2a2a2f;top:500.00px;right:1746.40px;transform-origin:100% 0;transform:scaleX(0.8375);">6:00</span>
<span class="t" style="font:normal normal 13px/13px 'Liberation Sans', sans-serif;color:#2a2a2f;top:501.00px;left:214.40px;transform:scaleX(0.9251);">Morning chores</span>
<span class="t" style="font:normal normal 9.5px/9.5px 'Liberation Sans', sans-serif;color:#2a2a2f;top:504.01px;letter-spacing:0.4px;left:305.00px;transform:scaleX(0.7738);">@3 ms.</span>
<span class="t" style="font:normal normal 13px/13px 'Liberation Sans', sans-serif;color:#2a2a2f;top:525.00px;right:1746.40px;transform-origin:100% 0;transform:scaleX(0.8603);">20:05</span>
<span class="t" style="font:normal normal 13px/13px 'Liberation Sans', sans-serif;color:#2a2a2f;top:526.00px;left:214.40px;transform:scaleX(0.9230);">After hours</span>
<span class="t" style="font:normal normal 9.5px/9.5px 'Liberation Sans', sans-serif;color:#2a2a2f;top:529.01px;letter-spacing:0.4px;left:280.80px;transform:scaleX(0.7795);">@1 ms.</span>
<span class="t" style="font:normal bold 14px/14px 'Liberation Sans', sans-serif;color:#1d1d21;top:554.00px;left:114.10px;transform:scaleX(0.7923);">recurring</span>
<span class="t" style="font:italic normal 13px/13px 'Liberation Sans', sans-serif;color:#2a2a2f;top:579.00px;left:105.20px;transform:scaleX(0.8764);">Executed at regular intervals</span>
<span class="t" style="font:normal normal 13px/13px 'Liberation Sans', sans-serif;color:#2a2a2f;top:604.00px;left:145.50px;transform:scaleX(0.9195);">add task</span>
<span class="t" style="font:normal normal 13px/13px 'Liberation Sans', sans-serif;color:#2a2a2f;top:629.01px;left:156.50px;transform:scaleX(0.9193);">Life hack reminders</span>
<span class="t" style="font:normal normal 13px/13px 'Liberation Sans', sans-serif;color:#2a2a2f;top:628.00px;left:344.00px;transform:scaleX(0.8674);">every 15 min.</span>
<span class="t" style="font:normal normal 13px/13px 'Liberation Sans', sans-serif;color:#2a2a2f;top:654.00px;left:156.50px;transform:scaleX(0.9145);">M marker</span>
<span class="t" style="font:normal normal 9.5px/9.5px 'Liberation Sans', sans-serif;color:#2a2a2f;top:657.01px;letter-spacing:0.4px;left:214.40px;transform:scaleX(0.7596);">@1 ms.</span>
<span class="t" style="font:normal normal 13px/13px 'Liberation Sans', sans-serif;color:#2a2a2f;top:653.01px;left:344.00px;transform:scaleX(0.8631);">every 5 sec.</span>
<span class="t" style="font:normal normal 13px/13px 'Liberation Sans', sans-serif;color:#2a2a2f;top:679.00px;left:156.50px;transform:scaleX(0.9413);">calculate drop coeff</span>
<span class="t" style="font:normal normal 9.5px/9.5px 'Liberation Sans', sans-serif;color:#2a2a2f;top:682.01px;letter-spacing:0.4px;left:269.80px;transform:scaleX(0.7826);">@181 ms.</span>
<span class="t" style="font:normal normal 13px/13px 'Liberation Sans', sans-serif;color:#2a2a2f;top:678.01px;left:344.00px;transform:scaleX(0.8674);">every 10 min.</span>
<span class="t" style="font:normal normal 13px/13px 'Liberation Sans', sans-serif;color:#2a2a2f;top:704.01px;left:156.50px;transform:scaleX(0.8816);">Sell-Signal</span>
<span class="t" style="font:normal normal 9.5px/9.5px 'Liberation Sans', sans-serif;color:#2a2a2f;top:707.00px;letter-spacing:0.4px;left:219.00px;transform:scaleX(0.7880);">@116 ms.</span>
<span class="t" style="font:normal normal 13px/13px 'Liberation Sans', sans-serif;color:#2a2a2f;top:703.00px;left:344.00px;transform:scaleX(0.8631);">every 6 sec.</span>
<span class="t" style="font:normal normal 13px/13px 'Liberation Sans', sans-serif;color:#2a2a2f;top:729.01px;left:156.50px;transform:scaleX(0.8795);">Buy-Signal</span>
<span class="t" style="font:normal normal 9.5px/9.5px 'Liberation Sans', sans-serif;color:#2a2a2f;top:732.00px;letter-spacing:0.4px;left:219.50px;transform:scaleX(0.7826);">@202 ms.</span>
<span class="t" style="font:normal normal 13px/13px 'Liberation Sans', sans-serif;color:#2a2a2f;top:728.00px;left:344.00px;transform:scaleX(0.8631);">every 5 sec.</span>
<span class="t" style="font:normal normal 13px/13px 'Liberation Sans', sans-serif;color:#2a2a2f;top:754.00px;left:156.50px;transform:scaleX(0.9075);">Take-Profit Check</span>
<span class="t" style="font:normal normal 13px/13px 'Liberation Sans', sans-serif;color:#2a2a2f;top:753.01px;left:344.00px;transform:scaleX(0.8631);">every 3 sec.</span>
<span class="t" style="font:normal normal 13px/13px 'Liberation Sans', sans-serif;color:#2a2a2f;top:779.00px;left:156.50px;transform:scaleX(0.9005);">Take-Loss Check</span>
<span class="t" style="font:normal normal 13px/13px 'Liberation Sans', sans-serif;color:#2a2a2f;top:778.00px;left:344.00px;transform:scaleX(0.8631);">every 3 sec.</span>
<span class="t" style="font:normal normal 13.5px/13.5px 'Liberation Sans', sans-serif;color:#15131a;top:5.01px;left:507.20px;transform:scaleX(0.9154);">JavaScript</span>
<span class="t" style="font:normal normal 13.5px/13.5px 'Liberation Sans', sans-serif;color:#15131a;top:5.01px;left:652.00px;transform:scaleX(0.8632);">__interval__</span>
<span class="t" style="font:normal normal 13.5px/13.5px 'Liberation Sans', sans-serif;color:#15131a;top:5.01px;left:960.60px;transform:scaleX(0.9433);">calculate drop coeff</span>
<span class="t" style="font:normal normal 12.5px/12.5px 'Liberation Sans', sans-serif;color:#23232c;top:38.00px;left:521.20px;transform:scaleX(0.7719);">Save</span>
<span class="t" style="font:normal normal 12.5px/12.5px 'Liberation Sans', sans-serif;color:#23232c;top:38.00px;left:580.50px;transform:scaleX(0.7411);">Run</span>
<span class="t" style="font:normal normal 12.5px/12.5px 'Liberation Sans', sans-serif;color:#23232c;top:38.00px;left:637.50px;transform:scaleX(0.7895);">Undo</span>
<span class="t" style="font:normal normal 12.5px/12.5px 'Liberation Sans', sans-serif;color:#23232c;top:38.00px;left:690.70px;transform:scaleX(0.8363);">Find/Replace</span>
<span class="t" style="font:normal normal 12px/12px 'Liberation Sans', sans-serif;color:#23232c;top:37.02px;left:776.00px;transform:scaleX(0.8994);">Arial</span>
<span class="t" style="font:normal normal 12px/12px 'Liberation Sans', sans-serif;color:#23232c;top:37.02px;left:891.30px;transform:scaleX(0.8075);">9</span>
<span class="t" style="font:normal normal 12.5px/12.5px 'Liberation Sans', sans-serif;color:#23232c;top:37.00px;left:954.70px;transform:scaleX(0.8012);">Move</span>
<span class="t" style="font:normal normal 12.5px/12.5px 'Liberation Sans', sans-serif;color:#23232c;top:37.00px;left:1020.50px;transform:scaleX(0.8511);">Format</span>
<span class="t" style="font:normal normal 12.5px/12.5px 'Liberation Sans', sans-serif;color:#23232c;top:37.00px;left:1084.50px;transform:scaleX(0.8754);">Print</span>
<span class="t" style="font:normal normal 12.5px/12.5px 'Liberation Sans', sans-serif;color:#1c1c22;top:38.00px;left:1297.00px;transform:scaleX(0.7961);">Enable</span>
<span class="t" style="font:normal normal 12.5px/12.5px 'Liberation Sans', sans-serif;color:#1c1c22;top:38.00px;left:1355.50px;transform:scaleX(0.8196);">Close</span>
<span class="t" style="font:normal normal 12.5px/12.5px 'Liberation Sans', sans-serif;color:#141219;top:913.01px;left:503.30px;transform:scaleX(0.7964);">Line: 12 Col: 8</span>
<span class="t" style="font:normal normal 12.5px/12.5px 'Liberation Sans', sans-serif;color:#1c1a22;top:913.01px;left:575.50px;">•</span>
<span class="t" style="font:normal normal 12.5px/12.5px 'Liberation Sans', sans-serif;color:#8b9aa6;top:913.01px;left:587.60px;transform:scaleX(0.8032);">0 errors</span>
<span class="t" style="font:normal bold 16.5px/16.5px 'Liberation Sans', sans-serif;color:#101014;top:13.01px;left:1427.90px;transform:scaleX(0.8014);">Algodab Platform</span>
<span class="t" style="font:normal normal 13px/13px 'Liberation Sans', sans-serif;color:#16161b;top:16.01px;left:1543.30px;">•</span>
<span class="t" style="font:normal normal 16px/16px 'Liberation Sans', sans-serif;color:#16161b;top:14.00px;left:1551.70px;transform:scaleX(0.8687);">eagle466</span>
<span class="t" style="font:normal normal 13px/13px 'Liberation Sans', sans-serif;color:#16161b;top:16.01px;left:1621.00px;">•</span>
<span class="t" style="font:normal normal 15px/15px 'Liberation Sans', sans-serif;color:#16161b;top:14.00px;left:1639.70px;transform:scaleX(0.8785);">Mon 2020-10-26</span>
<span class="t" style="font:normal normal 12.5px/12.5px 'Liberation Sans', sans-serif;color:#16161b;top:18.01px;left:1813.00px;transform:scaleX(0.8266);">@</span>
<span class="t" style="font:normal bold 13.5px/13.5px 'Liberation Sans', sans-serif;color:#101014;top:17.01px;left:1826.60px;transform:scaleX(0.8213);">9:31</span>
<span class="t" style="font:normal normal 12px/12px 'Liberation Sans', sans-serif;color:#16161b;top:18.01px;left:1859.00px;">•</span>
<span class="t" style="font:normal normal 13.5px/13.5px 'Liberation Sans', sans-serif;color:#8d9eac;top:17.01px;left:1872.60px;transform:scaleX(0.8957);">View log</span>
<span class="t" style="font:normal normal 12.5px/12.5px 'Liberation Sans', sans-serif;color:#16161b;top:44.00px;left:1426.30px;transform:scaleX(0.9213);">8 positions • 0 open orders •</span>
<span class="t" style="font:normal bold 12.5px/12.5px 'Liberation Sans', sans-serif;color:#101014;top:44.00px;left:1573.90px;transform:scaleX(0.8378);">Status:</span>
<span class="t" style="font:normal normal 12.5px/12.5px 'Liberation Sans', sans-serif;color:#16161b;top:44.00px;left:1613.40px;transform:scaleX(0.9058);">Market open. •</span>
<span class="t" style="font:normal bold 12.5px/12.5px 'Liberation Sans', sans-serif;color:#101014;top:44.00px;left:1690.40px;transform:scaleX(0.8574);">Market Open:</span>
<span class="t" style="font:normal normal 12.5px/12.5px 'Liberation Sans', sans-serif;color:#16161b;top:44.00px;left:1762.40px;transform:scaleX(0.8502);">FULL DAY •</span>
<span class="t" style="font:normal bold 12.5px/12.5px 'Liberation Sans', sans-serif;color:#101014;top:44.00px;left:1822.00px;transform:scaleX(0.8163);">Broker:</span>
<span class="t" style="font:normal normal 12.5px/12.5px 'Liberation Sans', sans-serif;color:#16161b;top:44.00px;left:1861.80px;transform:scaleX(0.9066);">connected</span>
<span class="t" style="font:normal normal 16.5px/16.5px 'Liberation Sans', sans-serif;color:#16161b;top:94.01px;left:1434.50px;transform:scaleX(0.7603);">APHA …</span>
<span class="t" style="font:normal normal 13px/13px 'Liberation Sans', sans-serif;color:#8b9098;top:95.00px;left:1534.00px;transform:scaleX(0.7367);">-</span>
<span class="t" style="font:normal normal 13px/13px 'Liberation Sans', sans-serif;color:#8b9098;top:95.00px;left:1603.70px;transform:scaleX(0.7367);">-</span>
<span class="t" style="font:normal normal 13px/13px 'Liberation Sans', sans-serif;color:#8b9098;top:95.00px;left:1617.60px;transform:scaleX(0.7367);">-</span>
<span class="t" style="font:normal normal 10px/10px 'Liberation Sans', sans-serif;color:#20202a;top:98.01px;left:1679.50px;transform:scaleX(0.8581);">STICKY</span>
<span class="t" style="font:normal normal 16px/16px 'Liberation Sans', sans-serif;color:#7e838c;top:94.00px;left:1885.40px;transform:scaleX(0.7640);">36653</span>
<span class="t" style="font:normal normal 16.5px/16.5px 'Liberation Sans', sans-serif;color:#16161b;top:126.01px;left:1434.50px;transform:scaleX(0.7195);">OSTK …</span>
<span class="t" style="font:normal normal 13px/13px 'Liberation Sans', sans-serif;color:#8b9098;top:127.00px;left:1534.00px;transform:scaleX(0.7367);">-</span>
<span class="t" style="font:normal normal 13px/13px 'Liberation Sans', sans-serif;color:#8b9098;top:127.00px;left:1603.70px;transform:scaleX(0.7367);">-</span>
<span class="t" style="font:normal normal 13px/13px 'Liberation Sans', sans-serif;color:#8b9098;top:127.00px;left:1617.60px;transform:scaleX(0.7367);">-</span>
<span class="t" style="font:normal normal 10px/10px 'Liberation Sans', sans-serif;color:#20202a;top:130.01px;left:1679.50px;transform:scaleX(0.8581);">STICKY</span>
<span class="t" style="font:normal normal 16px/16px 'Liberation Sans', sans-serif;color:#7e838c;top:126.00px;left:1885.40px;transform:scaleX(0.7640);">17315</span>
<span class="t" style="font:normal normal 16.5px/16.5px 'Liberation Sans', sans-serif;color:#16161b;top:158.01px;left:1434.50px;transform:scaleX(0.7142);">SPXS …</span>
<span class="t" style="font:normal normal 13px/13px 'Liberation Sans', sans-serif;color:#8b9098;top:159.00px;left:1534.00px;transform:scaleX(0.7367);">-</span>
<span class="t" style="font:normal normal 13px/13px 'Liberation Sans', sans-serif;color:#8b9098;top:159.00px;left:1603.70px;transform:scaleX(0.7367);">-</span>
<span class="t" style="font:normal normal 13px/13px 'Liberation Sans', sans-serif;color:#8b9098;top:159.00px;left:1617.60px;transform:scaleX(0.7367);">-</span>
<span class="t" style="font:normal normal 10px/10px 'Liberation Sans', sans-serif;color:#20202a;top:162.01px;left:1679.50px;transform:scaleX(0.8581);">STICKY</span>
<span class="t" style="font:normal normal 16px/16px 'Liberation Sans', sans-serif;color:#7e838c;top:158.00px;left:1885.40px;transform:scaleX(0.7640);">26508</span>
<span class="t" style="font:normal normal 16.5px/16.5px 'Liberation Sans', sans-serif;color:#16161b;top:190.01px;left:1434.50px;transform:scaleX(0.7158);">GME …</span>
<span class="t" style="font:normal normal 13px/13px 'Liberation Sans', sans-serif;color:#8b9098;top:191.00px;left:1534.00px;transform:scaleX(0.7367);">-</span>
<span class="t" style="font:normal normal 13px/13px 'Liberation Sans', sans-serif;color:#8b9098;top:191.00px;left:1603.70px;transform:scaleX(0.7367);">-</span>
<span class="t" style="font:normal normal 13px/13px 'Liberation Sans', sans-serif;color:#8b9098;top:191.00px;left:1617.60px;transform:scaleX(0.7367);">-</span>
<span class="t" style="font:normal normal 10px/10px 'Liberation Sans', sans-serif;color:#20202a;top:194.01px;left:1679.50px;transform:scaleX(0.8581);">STICKY</span>
<span class="t" style="font:normal normal 16px/16px 'Liberation Sans', sans-serif;color:#7e838c;top:190.00px;left:1885.40px;transform:scaleX(0.7640);">14495</span>
<span class="t" style="font:normal bold 30px/30px 'Liberation Sans', sans-serif;color:#000;top:214.00px;left:1433.90px;transform:scaleX(0.8291);-webkit-text-stroke:1.4px currentColor;"><span style="color:#000">Game</span><span style="color:#f00">Stop</span></span>
<span class="t" style="font:normal bold 16.5px/16.5px 'Liberation Sans', sans-serif;color:#0e0e12;top:229.00px;left:1584.20px;transform:scaleX(0.7933);">GameStop Corporation</span>
<span class="t" style="font:normal normal 12.5px/12.5px 'Liberation Sans', sans-serif;color:#16161b;top:233.00px;left:1732.60px;transform:scaleX(0.8443);">New York Stock Exchange</span>
<span class="t" style="font:normal normal 12.5px/12.5px 'Liberation Sans', sans-serif;color:#16161b;top:224.01px;left:1880.80px;transform:scaleX(0.8545);">Last</span>
<span class="t" style="font:normal normal 16px/16px 'Liberation Sans', sans-serif;color:#16161b;top:240.01px;left:1881.60px;transform:scaleX(0.9489);">14.95</span>
<span class="t" style="font:normal normal 12.5px/12.5px 'Liberation Sans', sans-serif;color:#16161b;top:252.00px;left:1434.20px;transform:scaleX(0.8472);">Retail - Apparel &amp; Specialty • Consumer Cyclical</span>
<span class="t" style="font:normal normal 11px/11px 'DejaVu Sans', sans-serif;color:#fff;top:300.01px;left:1503.20px;transform:scaleX(1.0346);">08:40</span>
<span class="t" style="font:normal normal 11px/11px 'DejaVu Sans', sans-serif;color:#fff;top:300.01px;left:1607.40px;transform:scaleX(1.0346);">08:45</span>
<span class="t" style="font:normal normal 11px/11px 'DejaVu Sans', sans-serif;color:#fff;top:300.01px;left:1711.60px;transform:scaleX(1.0346);">08:50</span>
<span class="t" style="font:normal normal 11px/11px 'DejaVu Sans', sans-serif;color:#fff;top:300.01px;left:1815.80px;transform:scaleX(1.0346);">08:55</span>
<span class="t" style="font:normal normal 11px/11px 'DejaVu Sans', sans-serif;color:#0c0c0e;top:322.00px;left:1461.00px;transform:scaleX(1.0058);">Price</span>
<span class="t" style="font:normal normal 11px/11px 'DejaVu Sans', sans-serif;color:#0c0c0e;top:322.00px;left:1493.50px;transform:scaleX(0.9905);">14.89</span>
<span class="t" style="font:normal normal 11px/11px 'DejaVu Sans', sans-serif;color:#0c0c0e;top:322.00px;left:1572.50px;transform:scaleX(0.9785);">MA6</span>
<span class="t" style="font:normal normal 11px/11px 'DejaVu Sans', sans-serif;color:#0c0c0e;top:322.00px;left:1602.00px;transform:scaleX(0.9780);">14.9113</span>
<span class="t" style="font:normal normal 11px/11px 'DejaVu Sans', sans-serif;color:#0c0c0e;top:322.00px;left:1679.00px;transform:scaleX(0.9834);">MA20</span>
<span class="t" style="font:normal normal 11px/11px 'DejaVu Sans', sans-serif;color:#0c0c0e;top:322.00px;left:1716.00px;transform:scaleX(0.9846);">14.9043</span>
<span class="t" style="font:normal normal 11px/11px 'DejaVu Sans', sans-serif;color:#0c0c0e;top:322.00px;left:1793.30px;transform:scaleX(0.9834);">MA60</span>
<span class="t" style="font:normal normal 11px/11px 'DejaVu Sans', sans-serif;color:#0c0c0e;top:322.00px;left:1830.00px;transform:scaleX(0.9780);">14.8319</span>
<span class="t" style="font:normal normal 11px/11px 'DejaVu Sans', sans-serif;color:#000;top:548.01px;left:1610.80px;transform:scaleX(1.0191);">Buy GME @ 14.6801, market order</span>
<span class="t" style="font:normal normal 11px/11px 'DejaVu Sans', sans-serif;color:#000;top:426.00px;left:1834.60px;transform:scaleX(1.0175);">Sell GME @ 14.6801, market order</span>
<span class="t" style="font:normal bold 11px/11px 'DejaVu Sans', sans-serif;color:#0c0c0e;top:643.00px;left:1440.00px;transform:scaleX(1.0130);">Volume</span>
<span class="t" style="font:normal normal 11px/11px 'DejaVu Sans', sans-serif;color:#0c0c0e;top:643.00px;left:1529.00px;transform:scaleX(1.0262);">8.5k</span>
<span class="t" style="font:normal normal 11px/11px 'DejaVu Sans', sans-serif;color:#0c0c0e;top:667.00px;left:1444.00px;transform:scaleX(1.0046);">200k</span>
<span class="t" style="font:normal normal 11px/11px 'DejaVu Sans', sans-serif;color:#0c0c0e;top:684.00px;left:1444.00px;transform:scaleX(0.9286);">0</span>
<span class="t" style="font:normal normal 11px/11px 'DejaVu Sans', sans-serif;color:#0c0c0e;top:704.00px;left:1487.50px;transform:scaleX(1.0251);">09:30</span>
<span class="t" style="font:normal normal 11px/11px 'DejaVu Sans', sans-serif;color:#0c0c0e;top:704.00px;left:1599.50px;transform:scaleX(1.0251);">09:31</span>
<span class="t" style="font:normal normal 11px/11px 'DejaVu Sans', sans-serif;color:#0c0c0e;top:704.00px;left:1711.50px;transform:scaleX(1.0251);">09:32</span>
<span class="t" style="font:normal normal 11px/11px 'DejaVu Sans', sans-serif;color:#0c0c0e;top:704.00px;left:1823.50px;transform:scaleX(1.0251);">09:33</span>
<span class="t" style="font:normal normal 17px/17px 'Liberation Sans', sans-serif;color:#6b6bbd;top:732.00px;left:1441.80px;transform:scaleX(0.8020);">From:</span>
<span class="t" style="font:normal normal 13px/13px 'Liberation Sans', sans-serif;color:#000;top:735.00px;left:1489.30px;">09:29</span>
<span class="t" style="font:normal normal 17px/17px 'Liberation Sans', sans-serif;color:#6b6bbd;top:732.00px;left:1533.50px;transform:scaleX(0.8463);">to:</span>
<span class="t" style="font:normal normal 13px/13px 'Liberation Sans', sans-serif;color:#000;top:735.00px;left:1560.70px;">09:42</span>
<span class="t" style="font:normal normal 12.5px/12.5px 'Liberation Sans', sans-serif;color:#16161b;top:798.00px;left:1706.40px;transform:scaleX(0.7783);">ADD SYMBOL</span>
<span class="t" style="font:normal bold 14.5px/14.5px 'Liberation Sans', sans-serif;color:#0e0e12;top:849.00px;left:1456.70px;transform:scaleX(0.7896);">Total in Play</span>
<span class="t" style="font:normal bold 11px/11px 'Liberation Sans', sans-serif;color:#0e0e12;top:852.01px;left:1531.80px;transform:scaleX(0.7992);">(% of account):</span>
<span class="t" style="font:normal normal 20.5px/20.5px 'Liberation Sans', sans-serif;color:#9b9bda;top:876.01px;left:1456.00px;transform:scaleX(0.8767);">$0</span>
<span class="t" style="font:normal normal 13.5px/13.5px 'Liberation Sans', sans-serif;color:#9b9bda;top:882.01px;left:1486.00px;transform:scaleX(0.7961);">(0%)</span>
<span class="t" style="font:normal bold 14.5px/14.5px 'Liberation Sans', sans-serif;color:#0e0e12;top:849.00px;left:1758.70px;transform:scaleX(0.7978);">Net Account Value:</span>
<span class="t" style="font:normal normal 20.5px/20.5px 'Liberation Sans', sans-serif;color:#9b9bda;top:876.01px;left:1758.70px;transform:scaleX(0.8771);">$2,000</span>
<svg style="position:absolute;left:1440px;top:336px" width="480" height="300" viewBox="0 0 480 300"><polygon points="17.6,117.7 10.3,109.4 13.5,109.4 13.5,101.4 21.7,101.4 21.7,109.4 24.9,109.4" fill="#0bd30b" stroke="#8a8f96" stroke-width="0.7"/><polygon points="36.3,174.0 29.0,165.7 32.2,165.7 32.2,157.7 40.4,157.7 40.4,165.7 43.6,165.7" fill="#0bd30b" stroke="#8a8f96" stroke-width="0.7"/><polygon points="36.3,189.3 29.0,181.0 32.2,181.0 32.2,173.0 40.4,173.0 40.4,181.0 43.6,181.0" fill="#0bd30b" stroke="#8a8f96" stroke-width="0.7"/><polygon points="54.9,160.0 47.6,151.7 50.8,151.7 50.8,143.7 59.0,143.7 59.0,151.7 62.2,151.7" fill="#0bd30b" stroke="#8a8f96" stroke-width="0.7"/><polygon points="129.6,236.3 122.3,228.0 125.5,228.0 125.5,220.0 133.7,220.0 133.7,228.0 136.9,228.0" fill="#0bd30b" stroke="#8a8f96" stroke-width="0.7"/><polygon points="167.0,247.1 159.7,238.8 162.9,238.8 162.9,230.8 171.1,230.8 171.1,238.8 174.3,238.8" fill="#0bd30b" stroke="#8a8f96" stroke-width="0.7"/><polygon points="185.6,225.5 178.3,217.2 181.5,217.2 181.5,209.2 189.7,209.2 189.7,217.2 192.9,217.2" fill="#0bd30b" stroke="#8a8f96" stroke-width="0.7"/><polygon points="391.0,110.7 383.7,119.0 386.9,119.0 386.9,127.0 395.1,127.0 395.1,119.0 398.3,119.0" fill="#0000e6" stroke="#8a8f96" stroke-width="0.7"/><polygon points="466.4,88.7 459.1,97.0 462.3,97.0 462.3,105.0 470.5,105.0 470.5,97.0 473.7,97.0" fill="#0000e6" stroke="#8a8f96" stroke-width="0.7"/><polygon points="241.8,117.5 259.2,109.0 259.2,126.0" fill="#000" stroke="#8a8f96" stroke-width="0.7"/></svg>
<span class="t" style="font:normal normal 11px/11px 'DejaVu Sans', sans-serif;color:#0c0c0e;top:364.01px;left:1444.70px;transform:scaleX(0.9841);">15.00</span>
<span class="t" style="font:normal normal 11px/11px 'DejaVu Sans', sans-serif;color:#0c0c0e;top:400.01px;left:1444.70px;transform:scaleX(0.9841);">14.95</span>
<span class="t" style="font:normal normal 11px/11px 'DejaVu Sans', sans-serif;color:#0c0c0e;top:436.01px;left:1444.70px;transform:scaleX(0.9841);">14.90</span>
<span class="t" style="font:normal normal 11px/11px 'DejaVu Sans', sans-serif;color:#0c0c0e;top:472.00px;left:1444.70px;transform:scaleX(0.9841);">14.85</span>
<span class="t" style="font:normal normal 11px/11px 'DejaVu Sans', sans-serif;color:#0c0c0e;top:508.00px;left:1444.70px;transform:scaleX(0.9841);">14.80</span>
<span class="t" style="font:normal normal 11px/11px 'DejaVu Sans', sans-serif;color:#0c0c0e;top:544.01px;left:1444.70px;transform:scaleX(0.9841);">14.75</span>
<span class="t" style="font:normal normal 11px/11px 'DejaVu Sans', sans-serif;color:#0c0c0e;top:580.01px;left:1444.70px;transform:scaleX(0.9841);">14.70</span>
<span class="t" style="font:normal normal 11px/11px 'DejaVu Sans', sans-serif;color:#0c0c0e;top:616.01px;left:1444.70px;transform:scaleX(0.9841);">14.65</span>
</body></html>
